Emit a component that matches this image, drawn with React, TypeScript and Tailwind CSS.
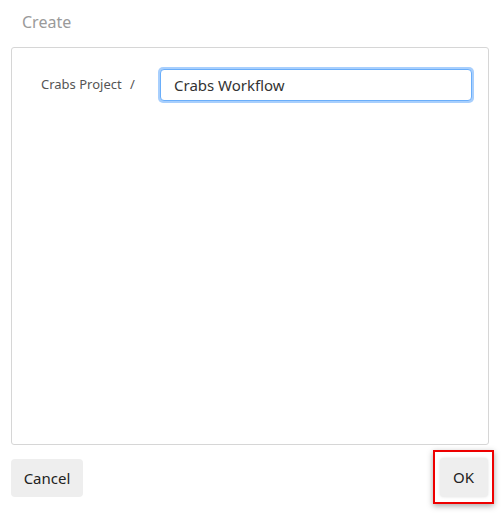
import React, { useState } from 'react';

const font = { fontFamily: '"Noto Sans", "Open Sans", Arial, sans-serif' };

// dialog for creating a workflow under a project
const CreateDialog = () => {
  const [name, setName] = useState('Crabs Workflow');

  return (
    <div className="w-[504px] h-[515px] bg-white flex flex-col" style={font}>
      {/* Title */}
      <div className="h-[47px] pl-[22px] pt-[10px] text-[16px] text-[#9a9a9a]">Create</div>

      {/* Form panel */}
      <div className="mx-[11px] mr-[15px] h-[398px] border border-[#d6d6d6] rounded-[3px] pt-[19px]">
        <div className="flex items-center">
          <label className="w-[146px] pl-[29px] text-[13px] text-[#555]">
            Crabs Project <span className="ml-[5px]">/</span>
          </label>
          <div className="rounded-[5px] p-[2px] bg-[#a8cffd]">
            <input
              value={name}
              onChange={e => setName(e.target.value)}
              autoFocus
              className="w-[312px] h-[32px] rounded-[4px] border border-[#6aaefa] bg-white px-[13px] text-[15px] text-[#333] outline-none caret-black"
              style={font}
            />
          </div>
        </div>
      </div>

      {/* Footer buttons */}
      <div className="flex items-start justify-between pl-[11px] pr-[10px] pt-[5px]">
        <button className="mt-[9px] w-[72px] h-[38px] rounded-[4px] bg-[#eeeeee] text-[15px] text-[#222]">
          Cancel
        </button>
        <div className="w-[61px] h-[54px] border-2 border-[#ee0000] shadow-[0_2px_6px_rgba(0,0,0,0.35)] flex items-center justify-center">
          <button className="w-[48px] h-[39px] rounded-[4px] bg-[#eeeeee] text-[15px] text-[#222] shadow-[0_0_3px_rgba(0,0,0,0.12)]">
            OK
          </button>
        </div>
      </div>
    </div>
  );
};

export default function App() {
  return <CreateDialog />;
}
